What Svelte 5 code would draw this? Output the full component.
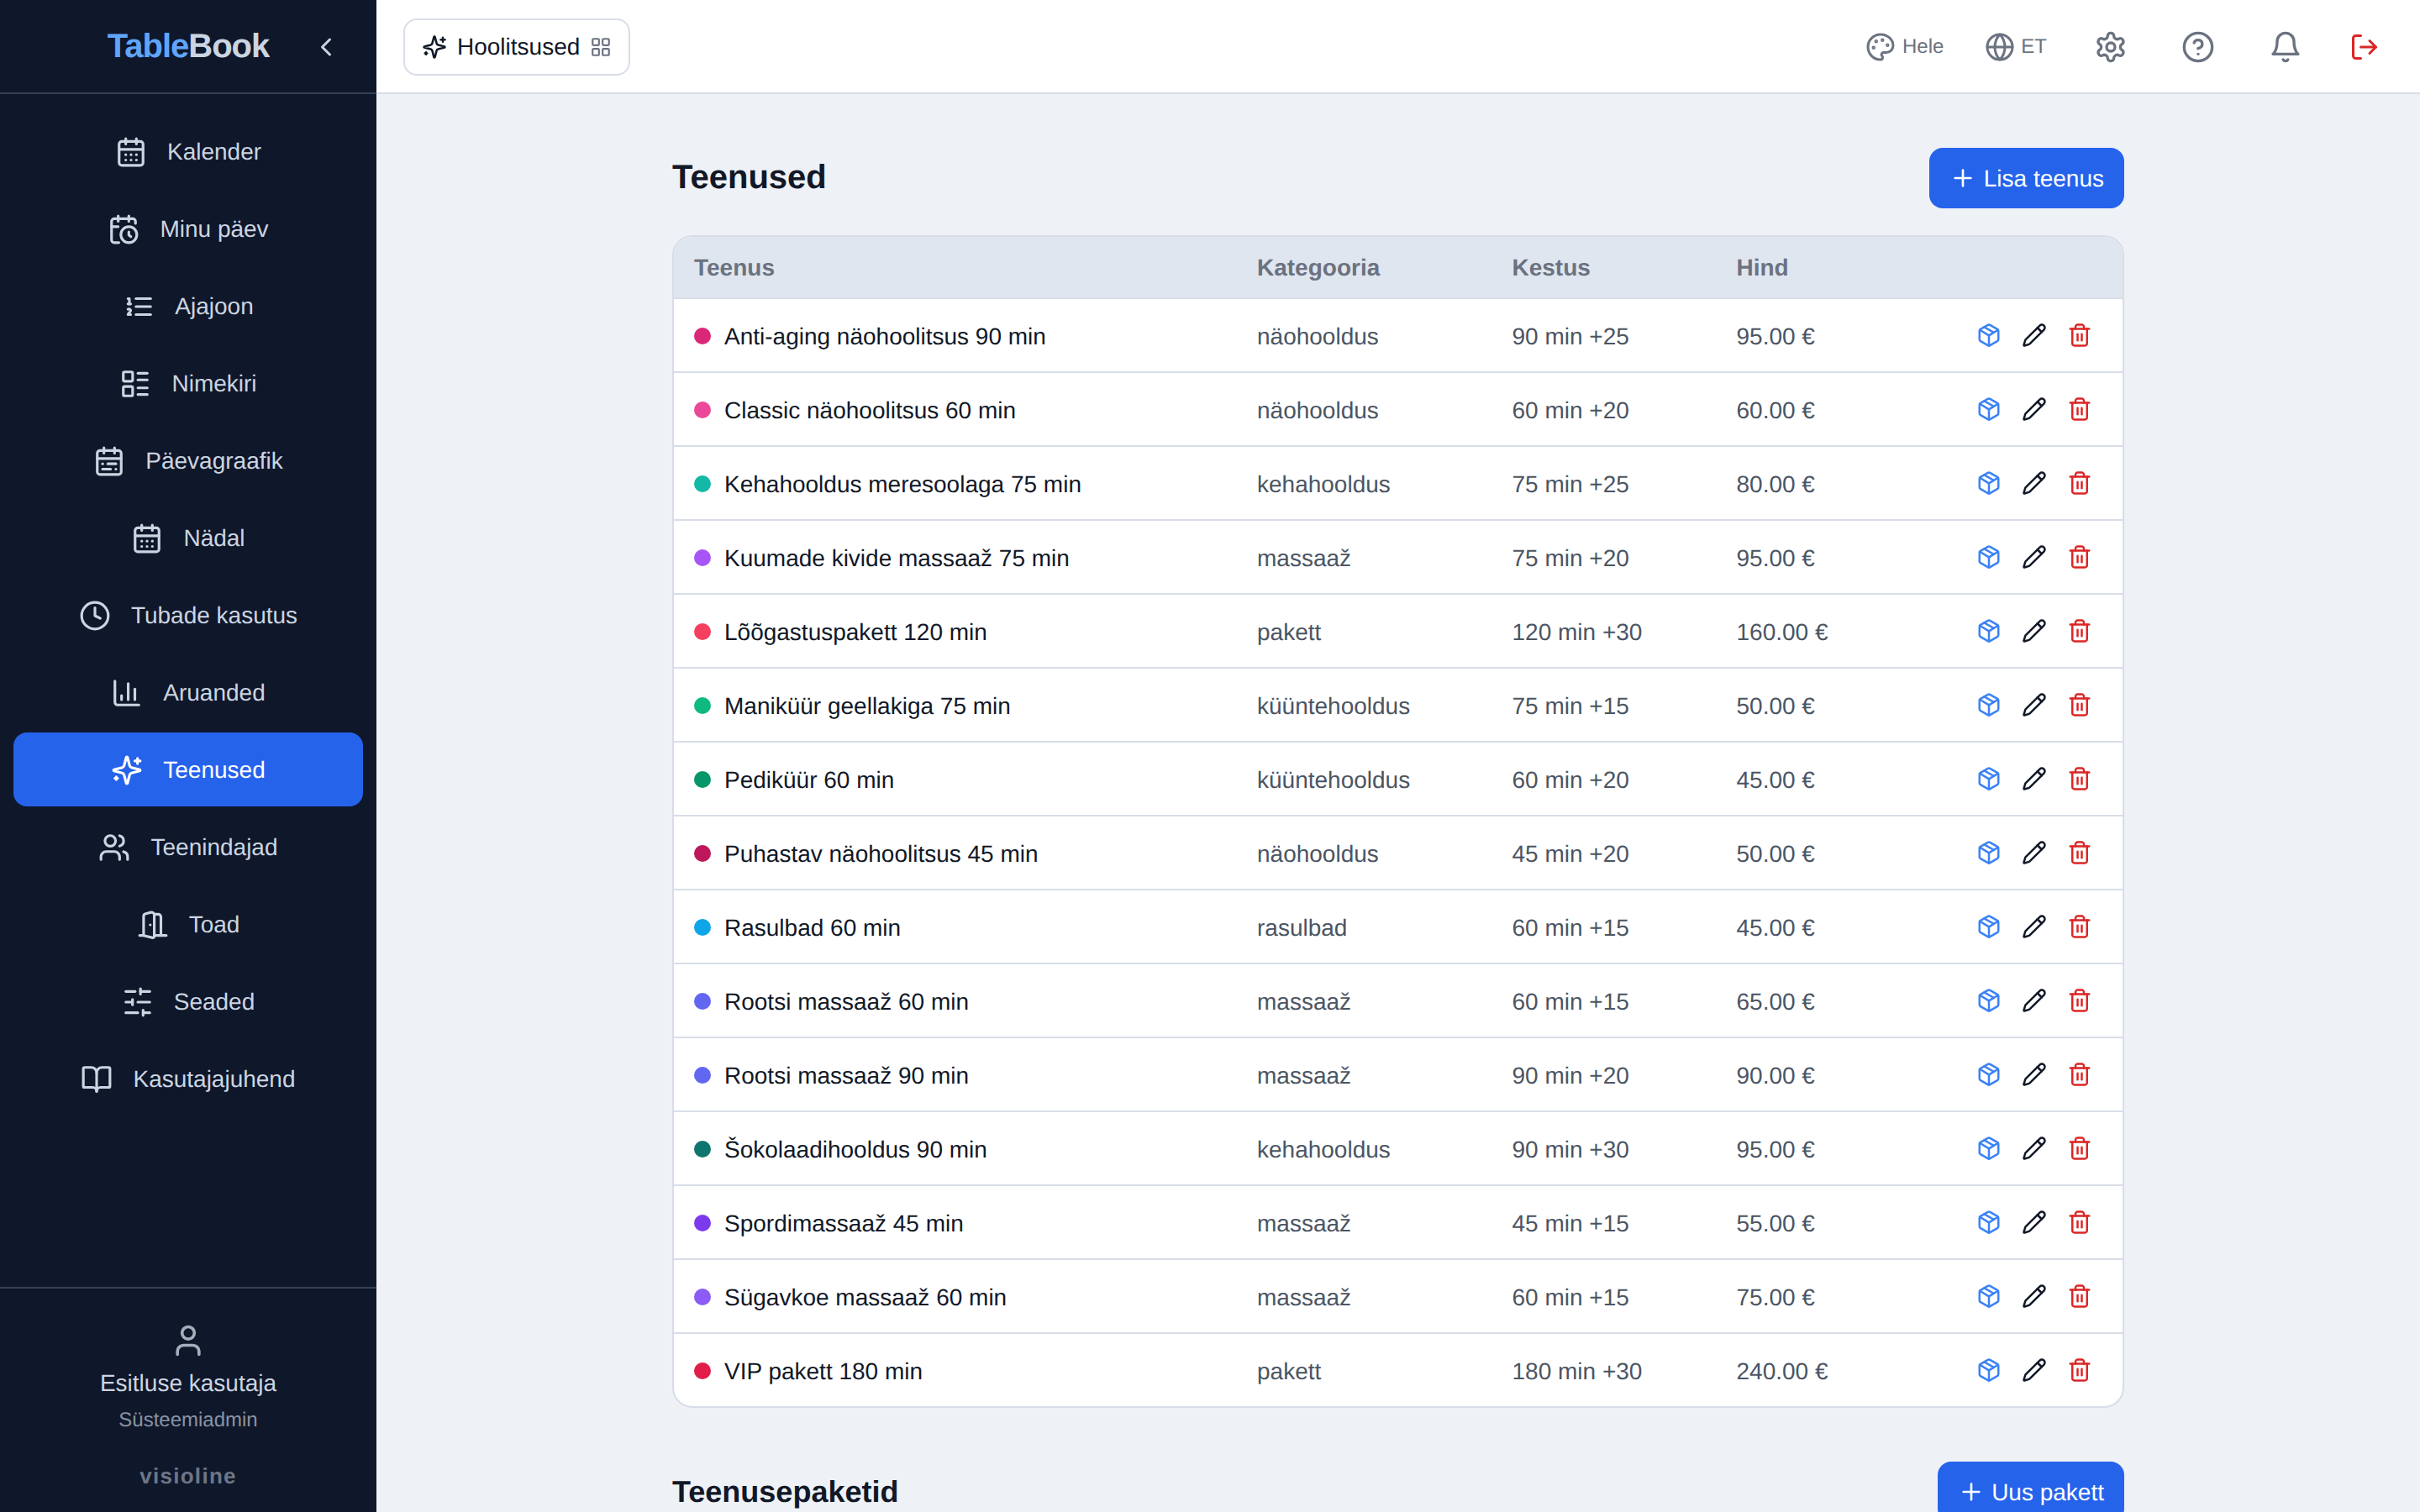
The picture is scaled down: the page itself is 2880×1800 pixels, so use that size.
<script>
  const icons = {
    calendarDays:
      '<path d="M8 2v4"/><path d="M16 2v4"/><rect width="18" height="18" x="3" y="4" rx="2"/><path d="M3 10h18"/><path d="M8 14h.01"/><path d="M12 14h.01"/><path d="M16 14h.01"/><path d="M8 18h.01"/><path d="M12 18h.01"/><path d="M16 18h.01"/>',
    calendarClock:
      '<path d="M21 7.5V6a2 2 0 0 0-2-2H5a2 2 0 0 0-2 2v14a2 2 0 0 0 2 2h3.5"/><path d="M16 2v4"/><path d="M8 2v4"/><path d="M3 10h5"/><path d="M17.5 17.5 16 16.3V14"/><circle cx="16" cy="16" r="6"/>',
    listOrdered:
      '<path d="M10 12h11"/><path d="M10 18h11"/><path d="M10 6h11"/><path d="M4 10h2"/><path d="M4 6h1v4"/><path d="M6 18H4c0-1 2-2 2-3s-1-1.5-2-1"/>',
    layoutList:
      '<rect width="7" height="7" x="3" y="3" rx="1"/><rect width="7" height="7" x="3" y="14" rx="1"/><path d="M14 4h7"/><path d="M14 9h7"/><path d="M14 15h7"/><path d="M14 20h7"/>',
    calendarRange:
      '<rect width="18" height="18" x="3" y="4" rx="2"/><path d="M16 2v4"/><path d="M3 10h18"/><path d="M8 2v4"/><path d="M17 14h-6"/><path d="M13 18H7"/><path d="M7 14h.01"/><path d="M17 18h.01"/>',
    clock: '<circle cx="12" cy="12" r="10"/><polyline points="12 6 12 12 16 14"/>',
    chart:
      '<path d="M3 3v16a2 2 0 0 0 2 2h16"/><path d="M18 17V9"/><path d="M13 17V5"/><path d="M8 17v-3"/>',
    sparkles:
      '<path d="M9.937 15.5A2 2 0 0 0 8.5 14.063l-6.135-1.582a.5.5 0 0 1 0-.962L8.5 9.936A2 2 0 0 0 9.937 8.5l1.582-6.135a.5.5 0 0 1 .963 0L14.063 8.5A2 2 0 0 0 15.5 9.937l6.135 1.581a.5.5 0 0 1 0 .964L15.5 14.063a2 2 0 0 0-1.437 1.437l-1.582 6.135a.5.5 0 0 1-.963 0z"/><path d="M20 3v4"/><path d="M22 5h-4"/><path d="M4 17v2"/><path d="M5 18H3"/>',
    users:
      '<path d="M16 21v-2a4 4 0 0 0-4-4H6a4 4 0 0 0-4 4v2"/><circle cx="9" cy="7" r="4"/><path d="M22 21v-2a4 4 0 0 0-3-3.87"/><path d="M16 3.13a4 4 0 0 1 0 7.75"/>',
    door:
      '<path d="M13 4h3a2 2 0 0 1 2 2v14"/><path d="M2 20h3"/><path d="M13 20h9"/><path d="M10 12v.01"/><path d="M13 4.562v16.157a1 1 0 0 1-1.242.97L5 20V5.562a2 2 0 0 1 1.515-1.94l4-1A2 2 0 0 1 13 4.561Z"/>',
    sliders:
      '<path d="M21 4h-7"/><path d="M10 4H3"/><path d="M21 12h-9"/><path d="M8 12H3"/><path d="M21 20h-5"/><path d="M12 20H3"/><path d="M14 2v4"/><path d="M8 10v4"/><path d="M16 18v4"/>',
    book:
      '<path d="M12 7v14"/><path d="M3 18a1 1 0 0 1-1-1V4a1 1 0 0 1 1-1h5a4 4 0 0 1 4 4 4 4 0 0 1 4-4h5a1 1 0 0 1 1 1v13a1 1 0 0 1-1 1h-6a3 3 0 0 0-3 3 3 3 0 0 0-3-3z"/>',
    user: '<path d="M19 21v-2a4 4 0 0 0-4-4H9a4 4 0 0 0-4 4v2"/><circle cx="12" cy="7" r="4"/>',
    grid:
      '<rect width="7" height="7" x="3" y="3" rx="1"/><rect width="7" height="7" x="14" y="3" rx="1"/><rect width="7" height="7" x="14" y="14" rx="1"/><rect width="7" height="7" x="3" y="14" rx="1"/>',
    palette:
      '<circle cx="13.5" cy="6.5" r=".5" fill="currentColor"/><circle cx="17.5" cy="10.5" r=".5" fill="currentColor"/><circle cx="8.5" cy="7.5" r=".5" fill="currentColor"/><circle cx="6.5" cy="12.5" r=".5" fill="currentColor"/><path d="M12 2C6.5 2 2 6.5 2 12s4.5 10 10 10c.926 0 1.648-.746 1.648-1.688 0-.437-.18-.835-.437-1.125-.29-.289-.438-.652-.438-1.125a1.64 1.64 0 0 1 1.668-1.668h1.996c3.051 0 5.555-2.503 5.555-5.554C21.965 6.012 17.461 2 12 2z"/>',
    globe:
      '<circle cx="12" cy="12" r="10"/><path d="M12 2a14.5 14.5 0 0 0 0 20 14.5 14.5 0 0 0 0-20"/><path d="M2 12h20"/>',
    settings:
      '<path d="M12.22 2h-.44a2 2 0 0 0-2 2v.18a2 2 0 0 1-1 1.73l-.43.25a2 2 0 0 1-2 0l-.15-.08a2 2 0 0 0-2.73.73l-.22.38a2 2 0 0 0 .73 2.73l.15.1a2 2 0 0 1 1 1.72v.51a2 2 0 0 1-1 1.74l-.15.09a2 2 0 0 0-.73 2.73l.22.38a2 2 0 0 0 2.73.73l.15-.08a2 2 0 0 1 2 0l.43.25a2 2 0 0 1 1 1.73V20a2 2 0 0 0 2 2h.44a2 2 0 0 0 2-2v-.18a2 2 0 0 1 1-1.73l.43-.25a2 2 0 0 1 2 0l.15.08a2 2 0 0 0 2.73-.73l.22-.39a2 2 0 0 0-.73-2.73l-.15-.08a2 2 0 0 1-1-1.74v-.5a2 2 0 0 1 1-1.74l.15-.09a2 2 0 0 0 .73-2.73l-.22-.38a2 2 0 0 0-2.73-.73l-.15.08a2 2 0 0 1-2 0l-.43-.25a2 2 0 0 1-1-1.73V4a2 2 0 0 0-2-2z"/><circle cx="12" cy="12" r="3"/>',
    help: '<circle cx="12" cy="12" r="10"/><path d="M9.09 9a3 3 0 0 1 5.83 1c0 2-3 3-3 3"/><path d="M12 17h.01"/>',
    bell:
      '<path d="M10.268 21a2 2 0 0 0 3.464 0"/><path d="M6 8a6 6 0 0 1 12 0c0 7 3 9 3 9H3s3-2 3-9"/>',
    logout:
      '<path d="M9 21H5a2 2 0 0 1-2-2V5a2 2 0 0 1 2-2h4"/><polyline points="16 17 21 12 16 7"/><path d="M21 12H9"/>',
    plus: '<path d="M5 12h14"/><path d="M12 5v14"/>',
    chevron: '<path d="m15 18-6-6 6-6"/>',
    package:
      '<path d="M11 21.73a2 2 0 0 0 2 0l7-4A2 2 0 0 0 21 16V8a2 2 0 0 0-1-1.73l-7-4a2 2 0 0 0-2 0l-7 4A2 2 0 0 0 3 8v8a2 2 0 0 0 1 1.73z"/><path d="M12 22V12"/><path d="m3.3 7 7.703 4.734a2 2 0 0 0 1.994 0L20.7 7"/><path d="m7.5 4.27 9 5.15"/>',
    pencil:
      '<path d="M21.174 6.812a1 1 0 0 0-3.986-3.987L3.842 16.174a2 2 0 0 0-.5.83l-1.321 4.352a.5.5 0 0 0 .623.622l4.353-1.32a2 2 0 0 0 .83-.497z"/><path d="m15 5 4 4"/>',
    trash:
      '<path d="M3 6h18"/><path d="M19 6v14c0 1-1 2-2 2H7c-1 0-2-1-2-2V6"/><path d="M8 6V4c0-1 1-2 2-2h4c1 0 2 1 2 2v2"/><path d="M10 11v6"/><path d="M14 11v6"/>'
  };

  const nav = [
    ['calendarDays', 'Kalender'],
    ['calendarClock', 'Minu päev'],
    ['listOrdered', 'Ajajoon'],
    ['layoutList', 'Nimekiri'],
    ['calendarRange', 'Päevagraafik'],
    ['calendarDays', 'Nädal'],
    ['clock', 'Tubade kasutus'],
    ['chart', 'Aruanded'],
    ['sparkles', 'Teenused'],
    ['users', 'Teenindajad'],
    ['door', 'Toad'],
    ['sliders', 'Seaded'],
    ['book', 'Kasutajajuhend']
  ];
  let active = $state('Teenused');

  const services = [
    ['#db2777', 'Anti-aging näohoolitsus 90 min', 'näohooldus', '90 min +25', '95.00 €'],
    ['#ec4899', 'Classic näohoolitsus 60 min', 'näohooldus', '60 min +20', '60.00 €'],
    ['#14b8a6', 'Kehahooldus meresoolaga 75 min', 'kehahooldus', '75 min +25', '80.00 €'],
    ['#a855f7', 'Kuumade kivide massaaž 75 min', 'massaaž', '75 min +20', '95.00 €'],
    ['#f43f5e', 'Lõõgastuspakett 120 min', 'pakett', '120 min +30', '160.00 €'],
    ['#10b981', 'Maniküür geellakiga 75 min', 'küüntehooldus', '75 min +15', '50.00 €'],
    ['#059669', 'Pediküür 60 min', 'küüntehooldus', '60 min +20', '45.00 €'],
    ['#be185d', 'Puhastav näohoolitsus 45 min', 'näohooldus', '45 min +20', '50.00 €'],
    ['#0ea5e9', 'Rasulbad 60 min', 'rasulbad', '60 min +15', '45.00 €'],
    ['#6366f1', 'Rootsi massaaž 60 min', 'massaaž', '60 min +15', '65.00 €'],
    ['#6366f1', 'Rootsi massaaž 90 min', 'massaaž', '90 min +20', '90.00 €'],
    ['#0f766e', 'Šokolaadihooldus 90 min', 'kehahooldus', '90 min +30', '95.00 €'],
    ['#7c3aed', 'Spordimassaaž 45 min', 'massaaž', '45 min +15', '55.00 €'],
    ['#8b5cf6', 'Sügavkoe massaaž 60 min', 'massaaž', '60 min +15', '75.00 €'],
    ['#e11d48', 'VIP pakett 180 min', 'pakett', '180 min +30', '240.00 €']
  ];
</script>

{#snippet icon(name, size)}
  <svg
    width={size}
    height={size}
    viewBox="0 0 24 24"
    fill="none"
    stroke="currentColor"
    stroke-width="2"
    stroke-linecap="round"
    stroke-linejoin="round"
    aria-hidden="true">{@html icons[name]}</svg>
{/snippet}

<div class="app">
  <aside class="sidebar">
    <div class="brand">
      <span class="logo"><span class="accent">Table</span>Book</span>
      <button class="collapse" aria-label="Ahenda">{@render icon('chevron', 36)}</button>
    </div>
    <nav>
      {#each nav as [glyph, label]}
        <button class="nav-item" class:active={active === label} onclick={() => (active = label)}>
          {@render icon(glyph, 38)}
          <span>{label}</span>
        </button>
      {/each}
    </nav>
    <div class="account">
      <span class="avatar">{@render icon('user', 44)}</span>
      <span class="name">Esitluse kasutaja</span>
      <span class="role">Süsteemiadmin</span>
      <span class="vendor">visioline</span>
    </div>
  </aside>

  <div class="page">
    <header class="topbar">
      <button class="module">
        {@render icon('sparkles', 30)}
        <span>Hoolitsused</span>
        <span class="muted">{@render icon('grid', 26)}</span>
      </button>
      <div class="tools">
        <button class="tool labelled">{@render icon('palette', 36)}<span>Hele</span></button>
        <button class="tool labelled language">{@render icon('globe', 36)}<span>ET</span></button>
        <button class="tool" aria-label="Seaded">{@render icon('settings', 40)}</button>
        <button class="tool" aria-label="Abi">{@render icon('help', 40)}</button>
        <button class="tool" aria-label="Teavitused">{@render icon('bell', 40)}</button>
        <button class="tool logout" aria-label="Logi välja">{@render icon('logout', 36)}</button>
      </div>
    </header>

    <main>
      <section>
        <div class="section-head">
          <h1>Teenused</h1>
          <button class="primary add-service">{@render icon('plus', 32)}<span>Lisa teenus</span></button>
        </div>
        <div class="table">
          <div class="row head">
            <span>Teenus</span>
            <span>Kategooria</span>
            <span>Kestus</span>
            <span>Hind</span>
            <span></span>
          </div>
          {#each services as [color, name, category, duration, price]}
            <div class="row">
              <span class="service"><i class="dot" style:background={color}></i><span class="title">{name}</span></span>
              <span class="cell">{category}</span>
              <span class="cell">{duration}</span>
              <span class="cell">{price}</span>
              <span class="actions">
                <button class="act pack" aria-label="Pakett">{@render icon('package', 30)}</button>
                <button class="act" aria-label="Muuda">{@render icon('pencil', 30)}</button>
                <button class="act del" aria-label="Kustuta">{@render icon('trash', 30)}</button>
              </span>
            </div>
          {/each}
        </div>
      </section>

      <section>
        <div class="section-head">
          <h2>Teenusepaketid</h2>
          <button class="primary">{@render icon('plus', 32)}<span>Uus pakett</span></button>
        </div>
      </section>
    </main>
  </div>
</div>

<style>
  :global(body) {
    margin: 0;
    overflow: hidden;
  }

  .app {
    display: flex;
    width: 100%;
    height: 100vh;
    overflow: hidden;
    background: #eef1f6;
    color: #111827;
    font: 28px/40px 'Liberation Sans', Arial, sans-serif;
    text-rendering: geometricPrecision;
  }

  .app * {
    box-sizing: border-box;
  }

  svg {
    display: block;
    flex: none;
  }

  button {
    margin: 0;
    padding: 0;
    border: 0;
    background: none;
    color: inherit;
    font: inherit;
    text-rendering: inherit;
    cursor: pointer;
  }

  .sidebar {
    display: flex;
    flex-direction: column;
    flex: none;
    width: 448px;
    background: #0f172a;
    color: #cbd5e1;
  }

  .brand {
    display: grid;
    grid-template-columns: 1fr auto 1fr;
    align-items: center;
    height: 112px;
    padding: 2px 24px 0;
    border-bottom: 2px solid #334155;
  }

  .logo {
    grid-column: 2;
    padding-bottom: 2px;
    font-size: 40px;
    font-weight: 700;
    letter-spacing: -0.025em;
  }

  .accent {
    color: #60a5fa;
  }

  .collapse {
    justify-self: end;
    margin-right: 18px;
  }

  nav {
    display: flex;
    flex-direction: column;
    flex: 1;
    gap: 4px;
    padding: 24px 16px;
  }

  .nav-item {
    display: flex;
    align-items: center;
    justify-content: center;
    gap: 24px;
    height: 88px;
    padding-top: 1px;
    border-radius: 16px;
  }

  .nav-item.active {
    background: #2563eb;
    color: #fff;
  }

  .account {
    display: flex;
    flex-direction: column;
    align-items: center;
    height: 268px;
    padding-top: 40px;
    border-top: 2px solid #334155;
  }

  .avatar {
    margin-bottom: 9px;
    opacity: 0.8;
  }

  .role {
    margin-top: 4px;
    font-size: 24px;
    opacity: 0.65;
  }

  .vendor {
    margin-top: 26px;
    font-size: 26px;
    font-weight: 700;
    letter-spacing: 0.05em;
    opacity: 0.5;
  }

  .page {
    display: flex;
    flex-direction: column;
    flex: 1;
    min-width: 0;
  }

  .topbar {
    display: flex;
    align-items: center;
    justify-content: space-between;
    flex: none;
    height: 112px;
    padding: 2px 32px 0;
    border-bottom: 2px solid #d8dde8;
    background: #fff;
  }

  .module {
    display: flex;
    align-items: center;
    gap: 12px;
    height: 68px;
    padding: 0 20px;
    border: 2px solid #d8dde8;
    border-radius: 16px;
  }

  .muted {
    color: #6b7280;
  }

  .tools {
    display: flex;
    align-items: center;
    gap: 16px;
    color: #6b7280;
  }

  .tool {
    display: flex;
    align-items: center;
    padding: 16px 24px;
  }

  .tool.labelled {
    gap: 8px;
    padding: 16px;
    font-size: 24px;
  }

  .tool.labelled.language {
    gap: 7px;
    padding-left: 17px;
  }

  .tool.logout {
    padding: 16px;
    color: #dc2626;
  }

  main {
    display: flex;
    flex-direction: column;
    gap: 64px;
    width: 1728px;
    margin: 0 auto;
    padding-top: 64px;
  }

  .section-head {
    display: flex;
    align-items: center;
    justify-content: space-between;
    height: 72px;
    margin-bottom: 32px;
  }

  h1,
  h2 {
    margin: 0;
    font-weight: 700;
  }

  h1 {
    padding-bottom: 3px;
    font-size: 40px;
  }

  h2 {
    font-size: 36px;
  }

  .primary {
    display: flex;
    align-items: center;
    justify-content: space-between;
    gap: 8px;
    height: 72px;
    padding: 0 24px;
    border-radius: 16px;
    background: #2563eb;
    color: #fff;
  }

  .primary.add-service {
    width: 232px;
  }

  .primary span {
    padding-top: 1px;
    white-space: nowrap;
  }

  .table {
    overflow: hidden;
    border: 2px solid #d8dde8;
    border-radius: 24px;
    background: #fff;
  }

  .row {
    display: grid;
    grid-template-columns: 670px 303.5px 267px 1fr auto;
    align-items: center;
    height: 88px;
    padding: 0 24px;
    border-bottom: 2px solid #d8dde8;
  }

  .row:last-child {
    height: 86px;
    border-bottom: 0;
  }

  .row.head {
    height: 74px;
    padding-top: 2px;
    background: #e0e6f0;
    color: #6b7280;
    font-weight: 700;
  }

  .service {
    display: flex;
    align-items: center;
    gap: 16px;
    padding-top: 2px;
  }

  .title {
    padding-top: 1px;
  }

  .dot {
    width: 20px;
    height: 20px;
    border-radius: 50%;
  }

  .cell {
    padding-top: 3px;
    color: #4b5563;
  }

  .actions {
    display: flex;
  }

  .act {
    padding: 12px;
  }

  .pack {
    color: #3b82f6;
  }

  .del {
    color: #dc2626;
  }
</style>
